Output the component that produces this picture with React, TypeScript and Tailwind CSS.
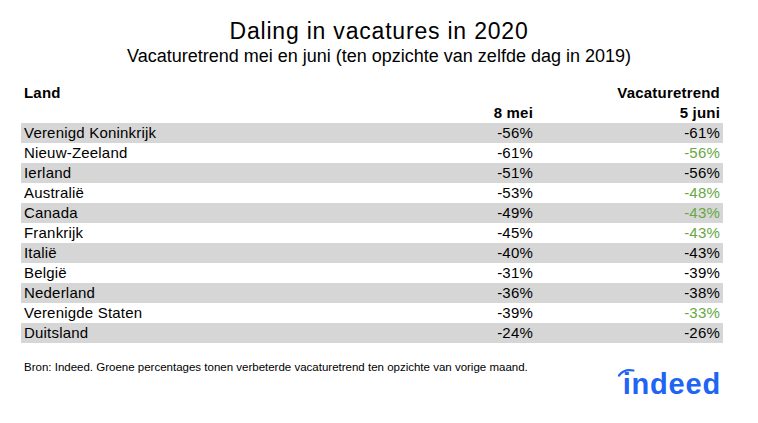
const rows: { land: string; mei: string; juni: string; beter?: boolean }[] = [
  { land: 'Verenigd Koninkrijk', mei: '-56%', juni: '-61%' },
  { land: 'Nieuw-Zeeland', mei: '-61%', juni: '-56%', beter: true },
  { land: 'Ierland', mei: '-51%', juni: '-56%' },
  { land: 'Australië', mei: '-53%', juni: '-48%', beter: true },
  { land: 'Canada', mei: '-49%', juni: '-43%', beter: true },
  { land: 'Frankrijk', mei: '-45%', juni: '-43%', beter: true },
  { land: 'Italië', mei: '-40%', juni: '-43%' },
  { land: 'België', mei: '-31%', juni: '-39%' },
  { land: 'Nederland', mei: '-36%', juni: '-38%' },
  { land: 'Verenigde Staten', mei: '-39%', juni: '-33%', beter: true },
  { land: 'Duitsland', mei: '-24%', juni: '-26%' },
]

function IndeedLogo() {
  return (
    <div className="relative mt-[10px] mr-[2px]">
      <svg className="absolute left-[-6px] top-[-3px]" width="18" height="12" viewBox="0 0 18 12" fill="none">
        <path d="M2 8.5 Q7 1.5 16.5 3.5" stroke="#2164f3" strokeWidth="2.2" strokeLinecap="round" />
      </svg>
      <span className="block text-[29px] font-bold leading-[28px] tracking-[0.8px] text-[#2164f3]">indeed</span>
    </div>
  )
}

export default function App() {
  return (
    <div className="h-[423px] w-[758px] overflow-hidden bg-white font-['Liberation_Sans',Arial,sans-serif] text-black">
      <div className="pt-[19px] text-center">
        <h1 className="text-[23px] leading-[24px] tracking-[0.8px]">Daling in vacatures in 2020</h1>
        <p className="mt-[3px] text-[18px] leading-[20px]">
          Vacaturetrend mei en juni (ten opzichte van zelfde dag in 2019)
        </p>
      </div>

      <div className="mx-[21px] mt-[17px] w-[702px]">
        <div className="grid grid-cols-[355px_160px_187px] text-[15px] font-bold leading-[20px] tracking-[0.2px]">
          <div className="pl-[3px]">Land</div>
          <div />
          <div className="pr-[3px] text-right">Vacaturetrend</div>
          <div />
          <div className="pr-[3px] text-right">8 mei</div>
          <div className="pr-[3px] text-right">5 juni</div>
        </div>

        {rows.map((r, i) => (
          <div
            key={r.land}
            className={`grid grid-cols-[355px_160px_187px] text-[15px] leading-[20px] tracking-[0.2px] ${i % 2 === 0 ? 'bg-[#d6d6d6]' : ''}`}
          >
            <div className="pl-[3px]">{r.land}</div>
            <div className="pr-[3px] text-right">{r.mei}</div>
            <div className={`pr-[3px] text-right ${r.beter ? 'text-[#67a844]' : ''}`}>{r.juni}</div>
          </div>
        ))}

        <div className="mt-[17px] flex items-start justify-between">
          <p className="pl-[3px] text-[11.5px] leading-[14px]">
            Bron: Indeed. Groene percentages tonen verbeterde vacaturetrend ten opzichte van vorige maand.
          </p>
          <IndeedLogo />
        </div>
      </div>
    </div>
  )
}
